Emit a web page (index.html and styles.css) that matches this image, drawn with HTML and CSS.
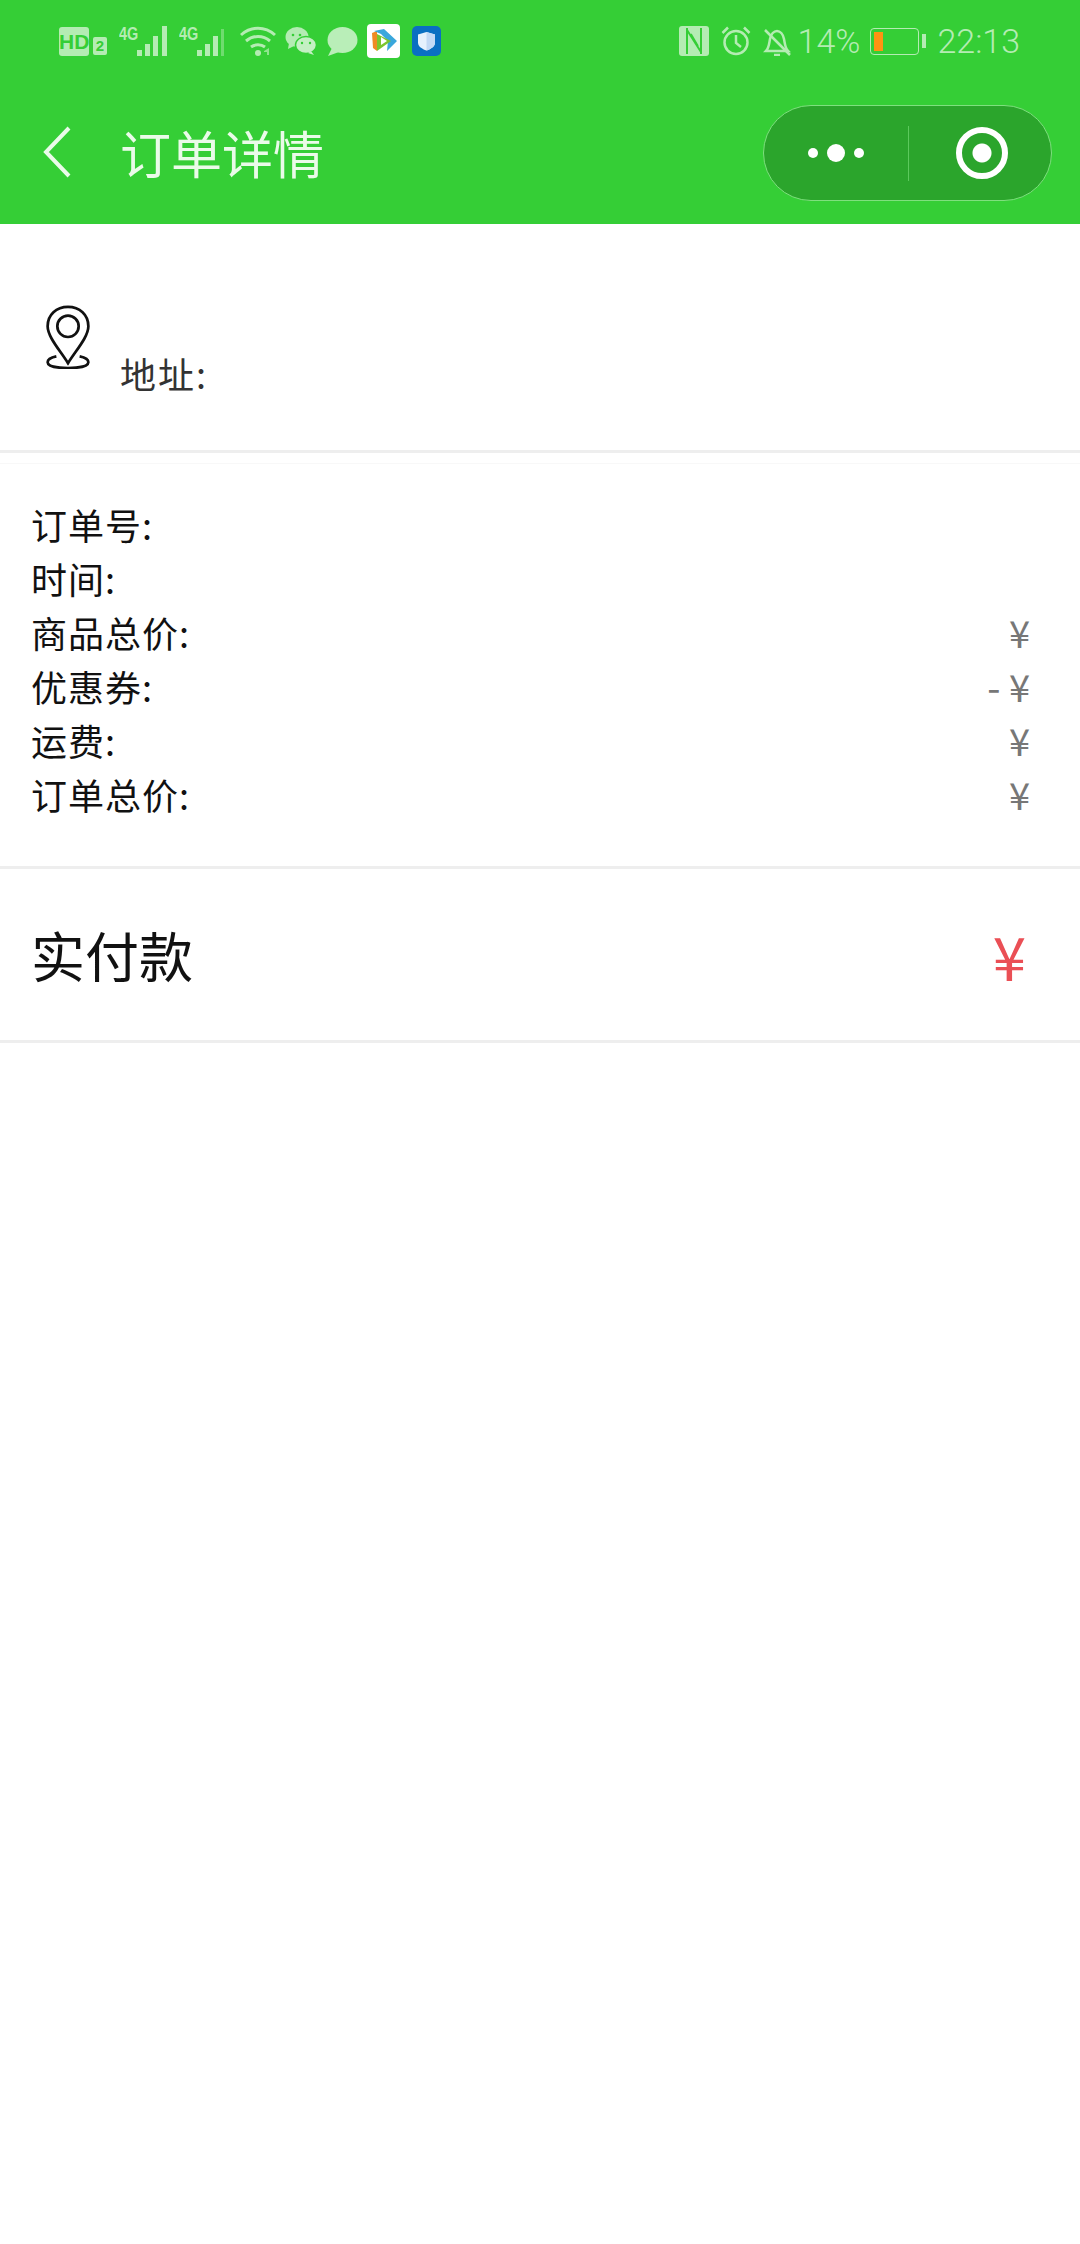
FILE: index.html
```html
<!DOCTYPE html>
<html lang="zh-CN">
<head>
    <meta charset="UTF-8">
    <meta name="viewport" content="width=device-width, initial-scale=1.0">
    <title>订单详情</title>
    <link rel="stylesheet" href="styles.css">
</head>
<body>
    <header class="header">
        <div class="status-bar">
            <div class="status-left">
                <span class="hd">HD</span>
                <span class="sim">2</span>
                <span class="net net-first">
                    <span class="net-label">4G</span>
                    <svg class="bars" width="32" height="30" viewBox="0 0 32 30"><path d="M1 24h5v6H1zM9 18h5v12H9zM17 10h5v20h-5zM26 0h5v30h-5z" fill="#b4ecb3"/></svg>
                </span>
                <span class="net">
                    <span class="net-label">4G</span>
                    <svg class="bars" width="30" height="30" viewBox="0 0 30 30"><path d="M1 24h5v6H1zM9 18h5v12H9zM17 10h5v20h-5z" fill="#b4ecb3"/><path d="M25 3h3v27h-3z" fill="#6fdc6f"/></svg>
                </span>
                <svg class="wifi" width="36" height="30" viewBox="0 0 36 30">
                    <path d="M1 9C11 0 25 0 35 9M6 15c7-6 17-6 24 0M11 21c4-3 10-3 14 0" fill="none" stroke="#b4ecb3" stroke-width="3"/>
                    <circle cx="18" cy="27" r="3" fill="#b4ecb3"/>
                    <path d="M29 22v7h-2v-3h-3v-1z" fill="#8ee58d"/>
                </svg>
                <svg class="app-icon" width="32" height="28" viewBox="0 0 32 28">
                    <ellipse cx="12" cy="10" rx="11.500" ry="10" fill="#b4ecb3"/>
                    <path d="M4 16l-1 6 6-3z" fill="#b4ecb3"/>
                    <ellipse cx="21" cy="18" rx="10.500" ry="8.500" fill="#c4f0c3" stroke="#35ce36" stroke-width="1.500"/>
                    <path d="M26 24l3 4-6-2z" fill="#c4f0c3"/>
                    <circle cx="8" cy="8" r="1.300" fill="#35ce36"/><circle cx="15" cy="8" r="1.300" fill="#35ce36"/>
                    <circle cx="17" cy="16" r="1.200" fill="#35ce36"/><circle cx="25" cy="16" r="1.200" fill="#35ce36"/>
                </svg>
                <svg class="app-icon app-msg" width="31" height="29" viewBox="0 0 31 29">
                    <ellipse cx="15.500" cy="13" rx="15" ry="13" fill="#b9eeb8"/>
                    <path d="M5 21L1 29l11-4z" fill="#b9eeb8"/>
                </svg>
                <svg class="tile" width="33" height="34" viewBox="0 0 33 34">
                    <rect width="33" height="34" rx="4" fill="#fff"/>
                    <path d="M5 9l5-2v20l-4-3z" fill="#f08a24"/>
                    <path d="M7 7l10-2 13 12-10 10 1-10-7-7z" fill="#3aa7dc"/>
                    <path d="M10 10l14 7-14 10z" fill="#7cc52f"/>
                    <path d="M14 13l6 4-6 4z" fill="#fff"/>
                </svg>
                <svg class="tile tile-shield" width="29" height="30" viewBox="0 0 29 30">
                    <rect width="29" height="30" rx="5" fill="#0a6fc2"/>
                    <path d="M14.500 6l8.500 2.500v8c0 4-4 6.500-8.500 8-4.500-1.500-8.500-4-8.500-8v-8z" fill="#e6f1fd"/>
                    <path d="M14.500 6l8.500 2.500v8c0 4-4 6.500-8.500 8z" fill="#c3d9f5"/>
                </svg>
            </div>
            <div class="status-right">
                <svg width="30" height="30" viewBox="0 0 30 30">
                    <rect width="30" height="30" rx="3" fill="#b4ecb3"/>
                    <path d="M8 2v26M22 2v26M8 4l14 22" fill="none" stroke="#35ce36" stroke-width="2"/>
                    <path d="M12 8l7 12" fill="none" stroke="#35ce36" stroke-width="1.500"/>
                </svg>
                <svg class="gap-alarm" width="30" height="30" viewBox="0 0 30 30" fill="none" stroke="#b4ecb3" stroke-width="2.500">
                    <circle cx="15" cy="16.500" r="11.500"/>
                    <path d="M15 9v8l5 4M1.500 7L7 1.500M28.500 7L23 1.500"/>
                </svg>
                <svg class="gap-bell" width="29" height="30" viewBox="0 0 29 30" fill="none" stroke="#b4ecb3" stroke-width="2.500">
                    <path d="M3 25c3-3 3-7 4-12 1-5 4-8 7-8s6 3 7 8c1 5 1 9 4 12z"/>
                    <path d="M11 29h6M2 4l25 25"/>
                </svg>
                <span class="percent">14%</span>
                <span class="battery"><span class="battery-level"></span></span>
                <span class="battery-nub"></span>
                <span class="clock">22:13</span>
            </div>
        </div>
        <nav class="nav">
            <svg class="back" width="30" height="54" viewBox="0 0 30 54"><path d="M27 3L4 27l23 24" fill="none" stroke="#eafbe9" stroke-width="4"/></svg>
            <span class="nav-title">订单详情</span>
            <div class="capsule">
                <div class="capsule-more">
                    <i class="dot"></i><i class="dot dot-big"></i><i class="dot"></i>
                </div>
                <div class="capsule-line"></div>
                <div class="capsule-close"><i class="close-ring"></i></div>
            </div>
        </nav>
    </header>

    <section class="address">
        <svg class="pin" width="46" height="64" viewBox="0 0 46 66" fill="none" stroke="#111" stroke-width="2.800">
            <path d="M23 60C15 47 2 33 2 22 2 10 11 2 23 2s21 8 21 20c0 11-13 25-21 38z"/>
            <circle cx="23" cy="22" r="11"/>
            <path d="M11 53c-5 1-9 3-9 6 0 4 9 6 21 6s21-2 21-6c0-3-4-5-9-6"/>
        </svg>
        <span class="address-text">地址:</span>
    </section>

    <section class="info">
        <div class="info-row"><span>订单号:</span></div>
        <div class="info-row"><span>时间:</span></div>
        <div class="info-row"><span>商品总价:</span><span class="price">¥</span></div>
        <div class="info-row"><span>优惠券:</span><span class="price">- ¥</span></div>
        <div class="info-row"><span>运费:</span><span class="price">¥</span></div>
        <div class="info-row"><span>订单总价:</span><span class="price">¥</span></div>
    </section>

    <section class="total">
        <span>实付款</span>
        <span class="total-price">¥</span>
    </section>
</body>
</html>
```

FILE: styles.css
```css
body {
    margin: 0;
    background-color: #fff;
    font-family: "Noto Sans CJK SC", "Liberation Sans", sans-serif;
    color: #111;
}

.header {
    height: 224px;
    background-color: #35ce36;
}

.status-bar {
    display: flex;
    justify-content: space-between;
    height: 80px;
    padding: 24px 60px 0 59px;
    color: #b4ecb3;
    box-sizing: border-box;
}

.status-left,
.status-right {
    display: flex;
    align-items: center;
    height: 34px;
}

.hd {
    width: 30px;
    height: 29px;
    background-color: #b4ecb3;
    border-radius: 3px;
    color: #35ce36;
    font: bold 21px/29px "Liberation Sans", sans-serif;
    text-align: center;
}

.sim {
    width: 14px;
    height: 18px;
    margin: 10px 0 0 4px;
    background-color: #b4ecb3;
    border-radius: 2px;
    color: #35ce36;
    font: bold 15px/18px "Liberation Sans", sans-serif;
    text-align: center;
}

.net {
    display: flex;
    margin-left: 11px;
}

.net-first {
    margin-left: 12px;
}

.net-label {
    width: 17px;
    font: bold 18px/16px "Liberation Sans", sans-serif;
    transform: scaleX(0.8);
    transform-origin: left top;
    align-self: flex-start;
}

.wifi {
    margin-left: 14px;
}

.app-icon {
    margin-left: 9px;
}

.app-msg {
    margin-left: 10px;
}

.tile {
    margin-left: 9px;
}

.tile-shield {
    margin-left: 12px;
}

.status-right svg {
    flex: none;
}

.gap-alarm {
    margin-left: 12px;
}

.gap-bell {
    margin-left: 12px;
}

.percent {
    margin-left: 6px;
    font: 300 34px/34px Roboto, sans-serif;
}

.battery {
    display: block;
    width: 49px;
    height: 27px;
    margin-left: 10px;
    border: 1px solid #b4ecb3;
    border-radius: 4px;
    box-sizing: border-box;
    padding: 3px;
}

.battery-level {
    display: block;
    width: 9px;
    height: 100%;
    background-color: #ff9312;
}

.battery-nub {
    width: 4px;
    height: 14px;
    margin: 0 11px 0 3px;
    background-color: #b4ecb3;
}

.clock {
    font: 300 34px/34px Roboto, sans-serif;
}

.nav {
    display: flex;
    align-items: center;
    height: 144px;
    padding: 0 28px 0 42px;
    box-sizing: border-box;
}

.back {
    flex: none;
}

.nav-title {
    margin-left: 48px;
    color: #eafbe9;
    font-size: 51px;
    line-height: 60px;
}

.capsule {
    display: flex;
    align-items: center;
    width: 289px;
    height: 96px;
    margin-top: 2px;
    margin-left: auto;
    background-color: #2ba52c;
    border: 1px solid #7ee07e;
    border-radius: 48px;
    box-sizing: border-box;
}

.capsule-more {
    display: flex;
    align-items: center;
    justify-content: center;
    gap: 9px;
    width: 144px;
}

.dot {
    width: 10px;
    height: 10px;
    background-color: #fff;
    border-radius: 50%;
}

.dot-big {
    width: 18px;
    height: 18px;
}

.capsule-line {
    width: 1px;
    height: 55px;
    background-color: #5cc95c;
}

.capsule-close {
    display: flex;
    justify-content: center;
    flex: 1;
    padding-left: 3px;
}

.close-ring {
    display: block;
    width: 52px;
    height: 52px;
    border: 6px solid #fff;
    border-radius: 50%;
    box-sizing: border-box;
    background: radial-gradient(circle, #fff 9px, transparent 10px);
}

.address {
    display: flex;
    align-items: flex-end;
    height: 229px;
    padding: 0 0 50px 45px;
    border-bottom: 3px solid #eee;
    box-sizing: border-box;
}

.pin {
    flex: none;
    margin-bottom: 31px;
}

.address-text {
    margin-left: 29px;
    color: #333;
    font-size: 36px;
    line-height: 54px;
    letter-spacing: 2px;
}

.info {
    margin-top: 10px;
    padding: 33px 50px 45px 31px;
    border-top: 1px solid #f8f8f8;
    border-bottom: 3px solid #eee;
}

.info-row {
    display: flex;
    justify-content: space-between;
    font-size: 36px;
    line-height: 54px;
    letter-spacing: 1px;
}

.price {
    color: #777;
    font-size: 38px;
    letter-spacing: 0;
}

.total {
    display: flex;
    justify-content: space-between;
    align-items: center;
    height: 174px;
    padding: 0 54px 0 31px;
    border-bottom: 3px solid #eee;
    box-sizing: border-box;
    font-size: 54px;
}

.total-price {
    color: #ea4f55;
    font-size: 60px;
}
```
